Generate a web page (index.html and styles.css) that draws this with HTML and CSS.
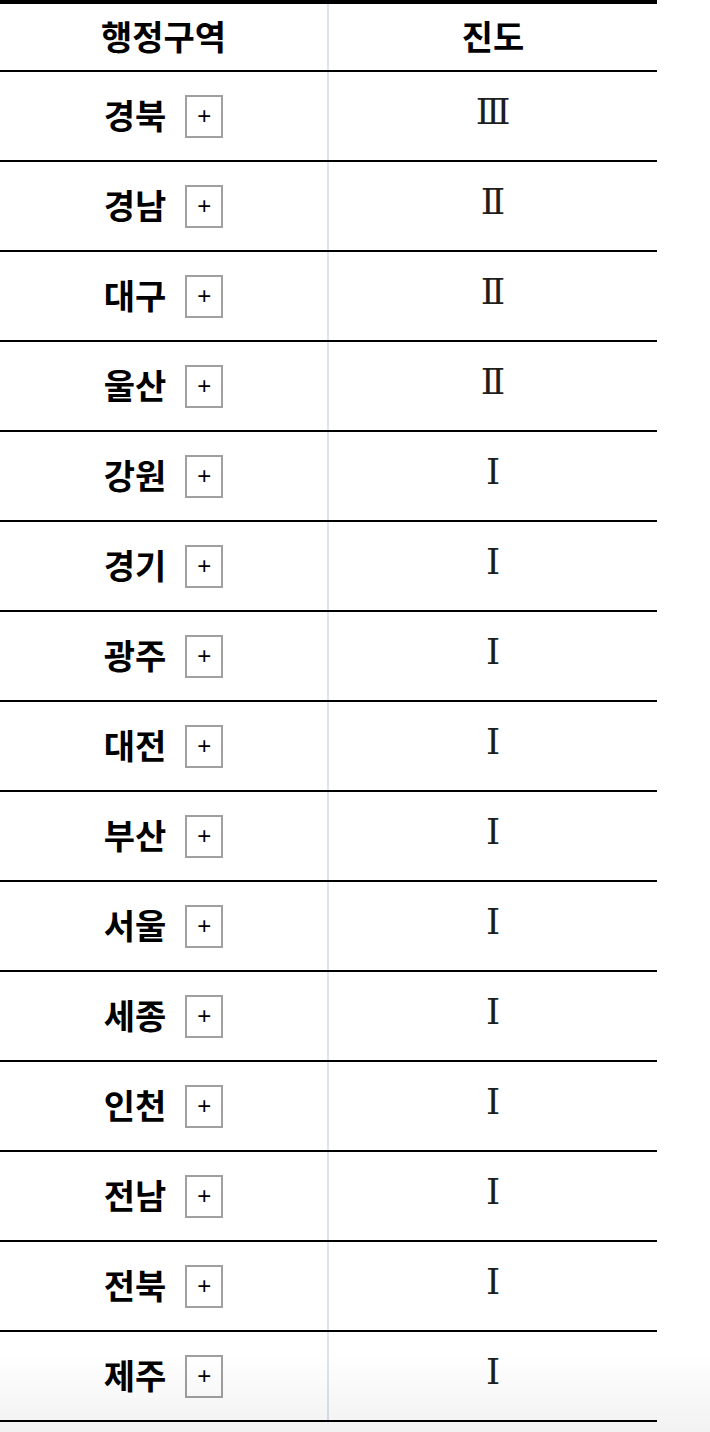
FILE: index.html
```html
<!DOCTYPE html>
<html lang="ko">
<head>
  <meta charset="UTF-8">
  <title>행정구역별 진도</title>
  <link rel="stylesheet" href="styles.css">
</head>
<body>
  <div class="intensity-table">
    <div class="row head">
      <div class="cell area">행정구역</div>
      <div class="cell">진도</div>
    </div>
    <div class="row"><div class="cell area">경북 <span class="more">+</span></div><div class="cell level">Ⅲ</div></div>
    <div class="row"><div class="cell area">경남 <span class="more">+</span></div><div class="cell level">Ⅱ</div></div>
    <div class="row"><div class="cell area">대구 <span class="more">+</span></div><div class="cell level">Ⅱ</div></div>
    <div class="row"><div class="cell area">울산 <span class="more">+</span></div><div class="cell level">Ⅱ</div></div>
    <div class="row"><div class="cell area">강원 <span class="more">+</span></div><div class="cell level">Ⅰ</div></div>
    <div class="row"><div class="cell area">경기 <span class="more">+</span></div><div class="cell level">Ⅰ</div></div>
    <div class="row"><div class="cell area">광주 <span class="more">+</span></div><div class="cell level">Ⅰ</div></div>
    <div class="row"><div class="cell area">대전 <span class="more">+</span></div><div class="cell level">Ⅰ</div></div>
    <div class="row"><div class="cell area">부산 <span class="more">+</span></div><div class="cell level">Ⅰ</div></div>
    <div class="row"><div class="cell area">서울 <span class="more">+</span></div><div class="cell level">Ⅰ</div></div>
    <div class="row"><div class="cell area">세종 <span class="more">+</span></div><div class="cell level">Ⅰ</div></div>
    <div class="row"><div class="cell area">인천 <span class="more">+</span></div><div class="cell level">Ⅰ</div></div>
    <div class="row"><div class="cell area">전남 <span class="more">+</span></div><div class="cell level">Ⅰ</div></div>
    <div class="row"><div class="cell area">전북 <span class="more">+</span></div><div class="cell level">Ⅰ</div></div>
    <div class="row"><div class="cell area">제주 <span class="more">+</span></div><div class="cell level">Ⅰ</div></div>
  </div>
  <div class="bottom-fade"></div>
</body>
</html>
```

FILE: styles.css
```css
body {
  margin: 0;
  background-color: #fff;
  font-family: "Noto Sans CJK KR", "Noto Sans", sans-serif;
  color: #000;
}
.intensity-table {
  width: 657px;
  border-top: 4px solid #000;
}
.row {
  display: grid;
  grid-template-columns: 329px 1fr;
  height: 90px;
  box-sizing: border-box;
  border-bottom: 2px solid #000;
}
.row.head {
  height: 68px;
}
.cell {
  display: flex;
  align-items: center;
  justify-content: center;
  padding-bottom: 4px;
  font-size: 34px;
  font-weight: bold;
}
.cell.area {
  border-right: 2px solid #dde3ef;
}
.more {
  display: flex;
  align-items: center;
  justify-content: center;
  width: 38px;
  height: 43px;
  box-sizing: border-box;
  margin-left: 19px;
  margin-top: 4px;
  border: 2px solid #a0a0a0;
  font-family: "Liberation Sans", sans-serif;
  font-size: 24px;
  font-weight: normal;
}
.cell.level {
  font-family: "DejaVu Serif", serif;
  font-size: 36px;
  font-weight: normal;
  color: #1e1e1e;
  padding-bottom: 10px;
}
.bottom-fade {
  position: fixed;
  left: 0;
  right: 0;
  bottom: 0;
  height: 80px;
  background: linear-gradient(rgba(0, 0, 0, 0), rgba(0, 0, 0, 0.05));
  pointer-events: none;
}
```
